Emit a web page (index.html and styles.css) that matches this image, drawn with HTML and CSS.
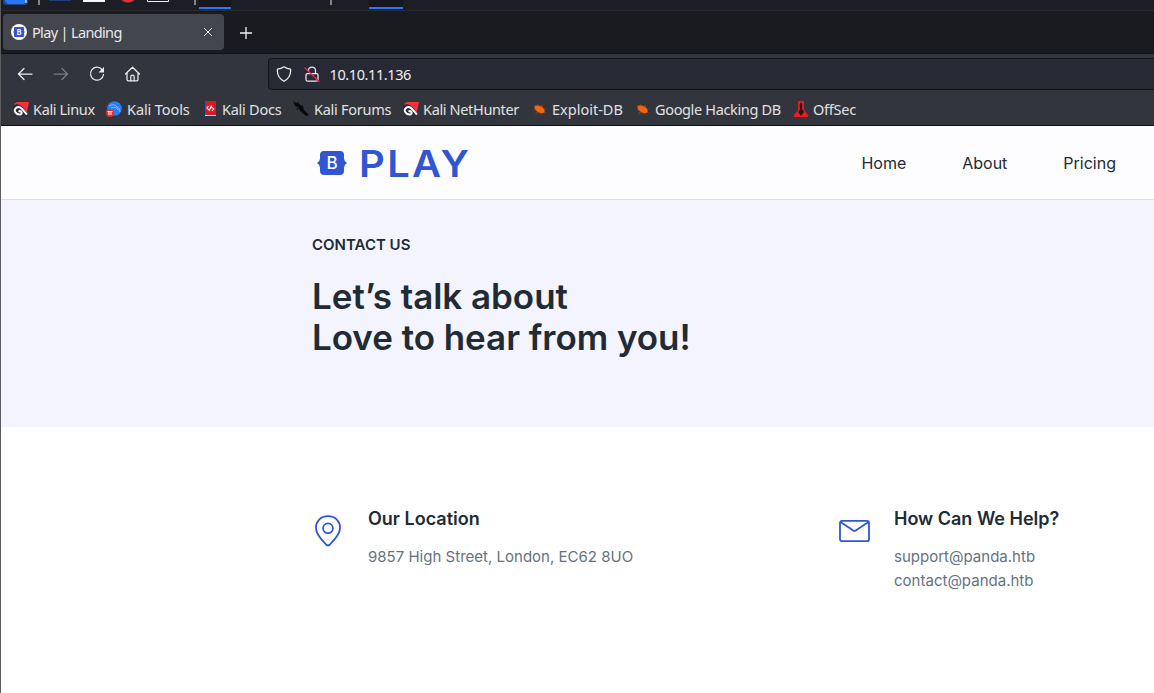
FILE: index.html
```html
<!DOCTYPE html>
<html lang="en">
<head>
<meta charset="utf-8">
<title>Play | Landing</title>
<link rel="stylesheet" href="styles.css">
</head>
<body>
<svg class="defs" width="0" height="0">
  <symbol id="dragon" viewBox="0 0 16 16">
    <path d="M1 3L4 1H16L13.500 13L9 6L4 5Z" fill="#f5323b"/>
    <path d="M0 5L4 3Q12 5 15 15H2Q0 12 0 8Z" fill="#2b2c32"/>
    <path d="M7.500 13.500C3 14 0 9.500 3 7C7 4 9.500 8.500 14 13.500M7.500 13.500Q9.500 12.500 8 10.500L5.500 10" fill="none" stroke="#fff" stroke-width="2"/>
  </symbol>
  <symbol id="bug" viewBox="0 0 16 16">
    <path d="M2 4L6 5L4 2L8 5L11 4L11 7L15 8L12 9L14 12L10 12L11 14L7 12L3 13L5 10L1 9L4 8Z" fill="#7d4327"/>
    <ellipse cx="7.500" cy="8.200" rx="5.600" ry="3" transform="rotate(30 7.500 8.200)" fill="#f3650f"/>
  </symbol>
</svg>

<div class="browser">
  <div class="desktop-bar">
    <svg width="420" height="10" viewBox="0 0 420 10">
      <rect x="3" y="-6" width="25" height="11" rx="3" fill="#2777ff" opacity=".45"/>
      <path d="M5 0H27L24 4H9Q5 3 5 0Z" fill="#2777ff"/><path d="M26 0V3" stroke="#fff"/>
      <path d="M39 0V5M195 0V5M331 0V5" stroke="#858585" stroke-width="2"/>
      <path d="M49 0H71V1H49Z" fill="#283c78"/><path d="M83 0H105V2H83Z" fill="#f5f6f8"/>
      <ellipse cx="128" cy="-2" rx="7" ry="4.500" fill="#dc303b"/>
      <path d="M147.500 0V1.500H168.500V0" fill="none" stroke="#f1f1f1"/>
      <path d="M199 0H231V7H199ZM369 0H403V7H369Z" fill="#15171d"/>
      <path d="M199 7H231V9H199ZM369 7H403V9H369Z" fill="#2777ff"/>
    </svg>
  </div>

  <div class="tabs">
    <div class="tab">
      <svg class="favicon" viewBox="0 0 16 16"><circle cx="8" cy="8" r="8" fill="#fff"/><path d="M4 3H12Q13 3 13 4V7L14 8L13 9V12Q13 13 12 13H4Q3 13 3 12V9L2 8L3 7V4Q3 3 4 3Z" fill="#3056d3"/><text x="8" y="10.500" text-anchor="middle" class="favicon-b">B</text></svg>
      <span class="tab-title">Play | Landing</span>
      <svg class="close" viewBox="0 0 8 8"><path d="M0 0L8 8M8 0L0 8"/></svg>
    </div>
    <svg class="plus" viewBox="0 0 12 12"><path d="M6 0V12M0 6H12"/></svg>
  </div>

  <div class="toolbar">
    <svg class="tool" viewBox="0 0 16 16"><path d="M15 8H1.500M7 2.500L1.500 8L7 13.500"/></svg>
    <svg class="tool dim" viewBox="0 0 16 16"><path d="M1 8H14.500M9 2.500L14.500 8L9 13.500"/></svg>
    <svg class="tool" viewBox="0 0 16 16"><path d="M13 3.500A6.500 6.500 0 1 0 14.500 8.500"/><path d="M15 1V6.500H9.500Z" class="solid"/></svg>
    <svg class="tool" viewBox="0 0 16 16"><path d="M.5 8L7.500 1.200L14.500 8M2 7V13.500Q2 14.800 3.500 14.800H11.500Q13 14.800 13 13.500V7M5.800 14.500V10.500Q5.800 9 7.500 9Q9.200 9 9.200 10.500V14.500"/></svg>
    <div class="address">
      <svg class="tool" viewBox="0 0 16 16"><path d="M8 .8Q11 2.900 14.500 3.200Q15.500 11 8 15.300Q.5 11 1.500 3.200Q5 2.900 8 .8Z"/></svg>
      <svg class="tool" viewBox="0 0 16 16"><path d="M4.500 4.500A3.500 3.500 0 0 1 11.500 4.500V7.500M3.500 7.500H12.500Q14 7.500 14 9V13.500Q14 15 12.500 15H3.500Q2 15 2 13.500V9Q2 7.500 3.500 7.500Z"/><path d="M1 2L15 15.500" class="slash"/></svg>
      <span class="url">10.10.11.136</span>
    </div>
  </div>

  <div class="bookmarks">
    <div class="bookmark"><svg viewBox="0 0 16 16"><use href="#dragon"/></svg><span>Kali Linux</span></div>
    <div class="bookmark"><svg viewBox="0 0 16 16"><circle cx="8.500" cy="7.500" r="7.300" fill="#287ff5"/><path d="M3 5Q8 2 11 6Q14 7 14 11M5 7Q10 5 12 9" fill="none" stroke="#a5caff" stroke-width=".8"/><circle cx="4" cy="12" r="4" fill="#e52e2d"/><path d="M1.500 10.500H6.500M3 10V14M5 10V14" stroke="#fff" fill="none"/></svg><span class="wide">Kali Tools</span></div>
    <div class="bookmark"><svg viewBox="0 0 16 16"><path d="M1 0H13V16H1Z" fill="#db1720"/><path d="M1 0H2V16H1ZM1 15H13V16H1Z" fill="#173969"/><path d="M2 14.500H13" stroke="#f2e9e9"/><path d="M5.500 5L3.800 7L6 9L8.500 6L10.800 8L9 10M8.500 4.500L6 10" fill="none" stroke="#fff" stroke-width="1.100"/></svg><span class="docs">Kali Docs</span></div>
    <div class="bookmark"><svg viewBox="0 0 16 16"><path d="M0 0L3 2L5 1L7 4L10 5L11 9L14 12L16 14L13 15L9 11L7 10L5 6L2 5Z" fill="#08090b"/><path d="M5 7L4 9M10 10L9 13" stroke="#08090b"/></svg><span class="forums">Kali Forums</span></div>
    <div class="bookmark"><svg viewBox="0 0 16 16"><use href="#dragon"/></svg><span>Kali NetHunter</span></div>
    <div class="bookmark"><svg viewBox="0 0 16 16"><use href="#bug"/></svg><span class="wider">Exploit-DB</span></div>
    <div class="bookmark"><svg viewBox="0 0 16 16"><use href="#bug"/></svg><span>Google Hacking DB</span></div>
    <div class="bookmark"><svg viewBox="0 0 16 16"><path d="M4 0H10V9L14 14V16H0V14L4 9Z" fill="#ec1b23"/><path d="M7 1L8.500 4L8 8L10 11L7 15L4 11L6 8L5.500 4Z" fill="#25191d"/></svg><span class="offsec">OffSec</span></div>
  </div>

  <div class="page">
    <header class="header">
      <div class="logo">
        <svg class="logo-mark" viewBox="0 0 30 26">
          <path d="M7 1H23Q27 1 27 5V8.500Q27 11 30 13Q27 15 27 17.500V21Q27 25 23 25H7Q3 25 3 21V17.500Q3 15 0 13Q3 11 3 8.500V5Q3 1 7 1Z" fill="#3056d3"/>
          <text x="15" y="19" text-anchor="middle" class="brand-b">B</text>
        </svg>
        <span class="wordmark">PLAY</span>
      </div>
      <nav class="nav"><a>Home</a><a>About</a><a>Pricing</a></nav>
    </header>
    <section class="hero">
      <p class="eyebrow">CONTACT US</p>
      <h1>Let’s talk about<br>Love to hear from you!</h1>
    </section>
    <section class="contacts">
      <div class="contact">
        <svg class="contact-icon" viewBox="0 0 32 32"><path d="M16 1.200C8.500 1.200 3.900 6.600 3.900 12.800C3.900 18.800 9.300 24.800 14.400 29.800Q16 31.200 17.600 29.800C22.700 24.800 28.100 18.800 28.100 12.800C28.100 6.600 23.500 1.200 16 1.200Z"/><circle cx="16" cy="13.300" r="4.900"/></svg>
        <div><h2>Our Location</h2><p>9857 High Street, London, EC62 8UO</p></div>
      </div>
      <div class="contact">
        <svg class="contact-icon" viewBox="0 0 32 32"><rect x="2" y="5.800" width="29" height="20.400" rx="2"/><path d="M2.500 7L15.300 15.500Q16.500 16.300 17.700 15.500L30.500 7"/></svg>
        <div><h2>How Can We Help?</h2><p>support@panda.htb<br>contact@panda.htb</p></div>
      </div>
    </section>
  </div>
</div>
</body>
</html>
```
FILE: styles.css
```css
* { box-sizing: border-box; }
body { margin: 0; background: #fff; overflow: hidden; font-family: Inter, sans-serif; }
.defs { display: block; }
svg { flex: none; }
.browser { height: 693px; border-left: 1px solid #5c5c5e; background: #1b1c21; }
.desktop-bar { height: 11px; border-bottom: 1px solid #292a2e; background: #1c1d25; }
.desktop-bar svg { display: block; margin-left: -1px; }
.tabs { height: 43px; display: flex; align-items: flex-start; padding: 3px 0 0 2px; background: #1a1b20; border-bottom: 1px solid #101115; }
.tab { width: 221px; height: 36px; padding: 0 12px 0 8px; display: flex; align-items: center; background: #44464d; border-radius: 4px; font: 14.5px "Noto Sans", sans-serif; color: #e9e9eb; }
.favicon { width: 16px; height: 16px; margin-bottom: 1px; }
.favicon-b { font: bold 7px Inter, sans-serif; fill: #fff; }
.tab-title { margin-left: 5px; letter-spacing: -.65px; white-space: nowrap; }
.close { width: 8px; height: 8px; margin: 0 0 1px auto; overflow: visible; stroke: #e8e8ea; fill: none; }
.plus { width: 12px; height: 12px; margin: 13px 0 0 15.5px; stroke: #f3f3f4; stroke-width: 1.3; }
.toolbar { height: 40px; display: flex; align-items: center; gap: 20px; padding-left: 16px; background: #33353d; }
.tool { width: 16px; height: 16px; fill: none; stroke: #ececed; stroke-width: 1.25; stroke-linecap: round; stroke-linejoin: round; }
.tool.dim { stroke: #7b7c82; }
.tool .solid { fill: #ececed; stroke: none; }
.tool .slash { stroke: #ed244b; stroke-width: 1.4; }
.address { height: 32px; flex: 1; margin-left: 107px; border: 1px solid #14151a; border-right: 0; border-radius: 4px 0 0 4px; background: #272935; display: flex; align-items: center; padding-left: 7px; gap: 12px; }
.url { font: 14.5px "Noto Sans", sans-serif; letter-spacing: -.4px; color: #f1f1f2; margin-left: -2.5px; }
.bookmarks { height: 32px; display: grid; grid-template-columns: 93px 97px 90px 110px 129px 103px 159px 100px; align-items: center; padding: 0 0 1px 12px; background: #33353d; border-bottom: 1px solid #0d0e11; }
.bookmark { display: flex; align-items: center; gap: 4px; color: #e1e1e3; font: 14.5px/20px "Noto Sans", sans-serif; letter-spacing: -.35px; white-space: nowrap; }
.bookmark svg { width: 16px; height: 16px; }
.bookmark .wide { letter-spacing: -.1px; margin-left: 1px; }
.bookmark .docs, .bookmark .offsec { margin-left: -1px; letter-spacing: -.25px; }
.bookmark .forums { letter-spacing: -.27px; margin-left: 1px; }
.bookmark .wider { letter-spacing: 0; }
.page { height: 567px; background: #fff; }
.header { height: 74px; display: flex; align-items: center; justify-content: space-between; padding: 0 38px 0 316px; background: #fdfdff; border-bottom: 1px solid #dedfe6; }
.logo { display: flex; align-items: center; gap: 12px; }
.logo-mark { width: 30px; height: 26px; }
.brand-b { font: 500 17px Inter, sans-serif; fill: #fff; }
.wordmark { font: 600 37px/50px Inter, sans-serif; color: #3056d3; letter-spacing: 2.2px; padding-top: 2px; transform: scaleX(1.08); transform-origin: left; }
.nav { display: flex; gap: 56px; font-size: 16px; color: #212b36; }
.hero { height: 227px; padding: 36px 0 0 311px; background: #f3f4fe; color: #212b36; }
.eyebrow { margin: 0; font-size: 15px; line-height: 18px; font-weight: 600; }
h1 { margin: 22px 0 0; font-size: 35px; line-height: 41px; font-weight: 600; letter-spacing: -.04px; }
.contacts { display: grid; grid-template-columns: 526px 1fr; padding: 80px 0 0 311px; }
.contact { display: flex; gap: 24px; }
.contact-icon { width: 32px; height: 32px; margin-top: 8px; fill: none; stroke: #3056d3; stroke-width: 1.8; }
h2 { margin: 0; font-size: 18px; line-height: 24px; font-weight: 600; color: #212b36; }
.contact p { margin: 14px 0 0; font-size: 15px; line-height: 24px; letter-spacing: .01px; color: #637381; white-space: nowrap; }
```
